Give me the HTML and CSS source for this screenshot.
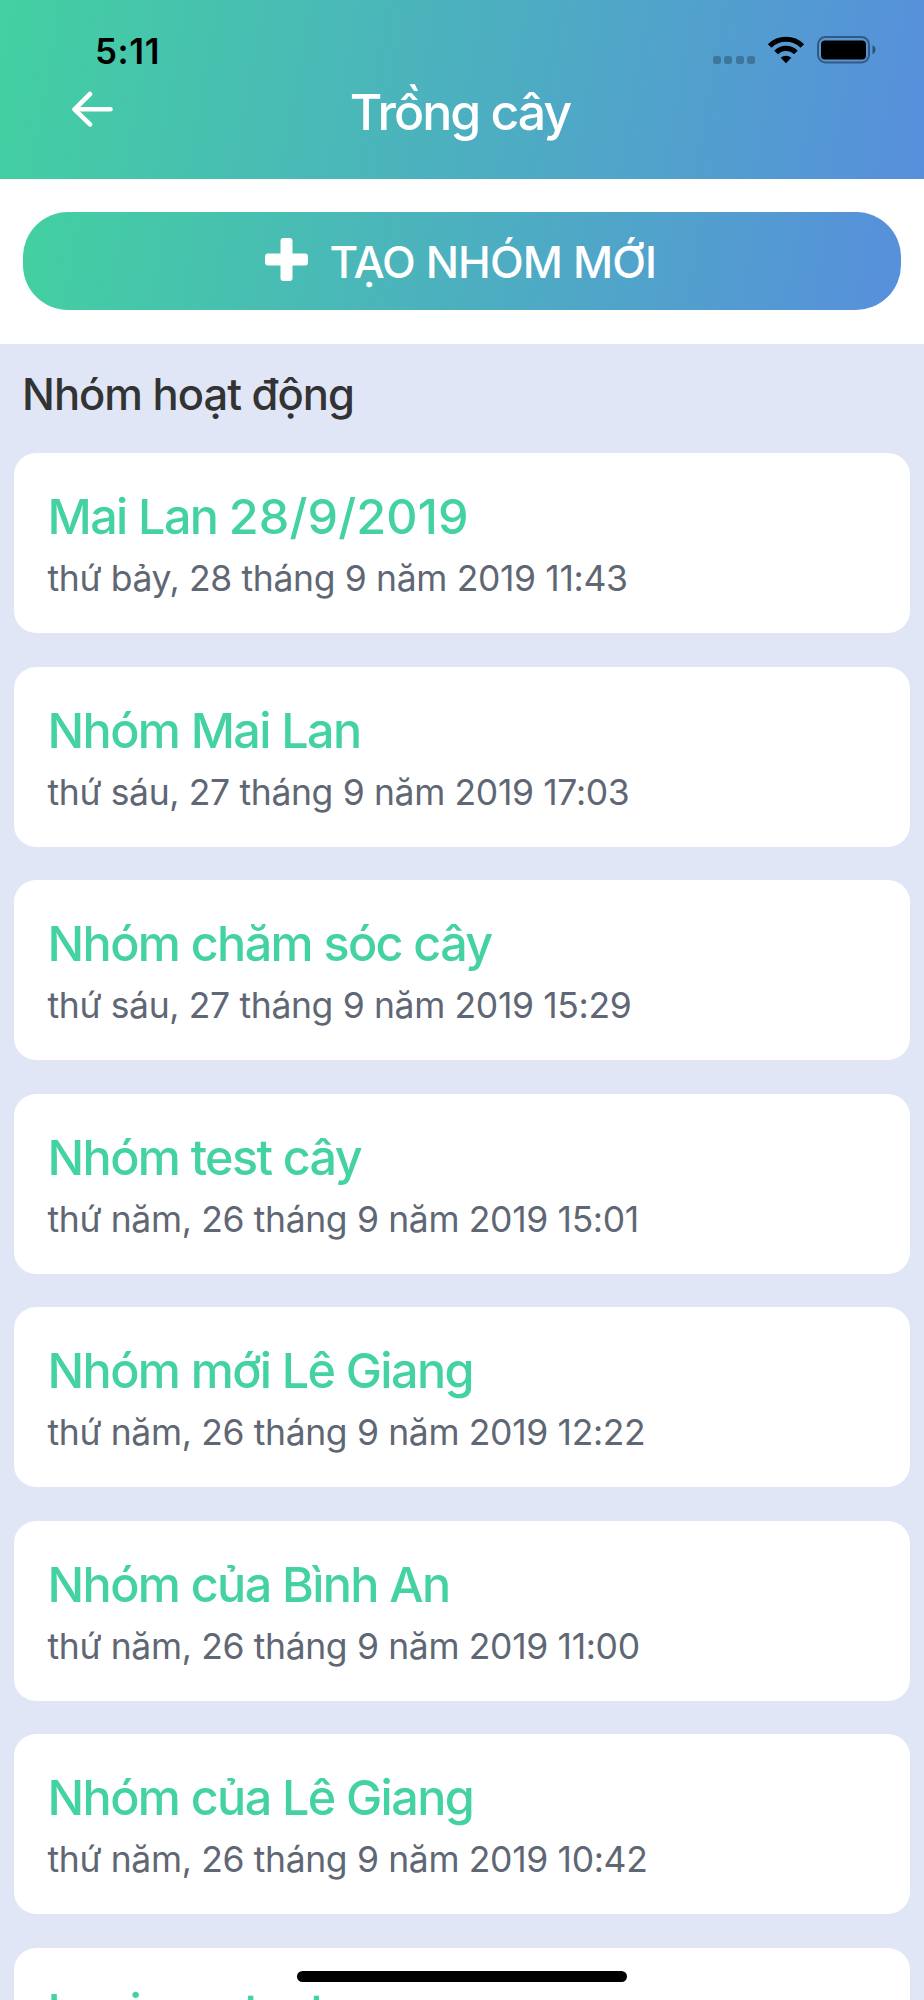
FILE: index.html
```html
<!DOCTYPE html>
<html lang="vi">
<head>
<meta charset="utf-8">
<title>Trồng cây</title>
<link rel="stylesheet" href="styles.css">
</head>
<body>
<div class="screen">
  <header class="header">
    <div class="status">
      <span class="time">5:11</span>
      <div class="indicators">
        <span class="dots"><i></i><i></i><i></i><i></i></span>
        <svg class="wifi" width="38" height="28" viewBox="0 0 38 28">
          <g fill="none" stroke="#000" stroke-width="5.2">
            <path d="M2.7 10a23.1 23.1 0 0 1 32.6 0"/>
            <path d="M9.1 16.5a14 14 0 0 1 19.8 0"/>
          </g>
          <path d="M13.7 21.8a7.6 7.6 0 0 1 10.6 0L19 27.3z"/>
        </svg>
        <svg class="battery" width="60" height="28" viewBox="0 0 60 28">
          <rect x="1" y="1" width="51" height="25.5" rx="7.5" fill="none" stroke="#000" stroke-opacity=".4" stroke-width="2"/>
          <rect x="4" y="4.5" width="45" height="19" rx="4"/>
          <path d="M55.5 9.3c4 1.600 4 7.400 0 9z" fill-opacity=".45"/>
        </svg>
      </div>
    </div>
    <div class="navbar">
      <svg class="back" width="42" height="36" viewBox="0 0 42 36" fill="none" stroke="#fff" stroke-width="4.600" stroke-linecap="round" stroke-linejoin="round">
        <path d="M19 3 3.500 18.300l15.500 15M3.500 18.300h36"/>
      </svg>
      <h1 class="title">Trồng cây</h1>
    </div>
  </header>
  <div class="action">
    <button class="create">
      <svg width="43" height="43" viewBox="0 0 43 43" fill="#fff">
        <rect x="15.500" y="0" width="12" height="43" rx="3"/>
        <rect x="0" y="15.500" width="43" height="12" rx="3"/>
      </svg>
      <span>TẠO NHÓM MỚI</span>
    </button>
  </div>
  <main class="groups">
    <h2 class="section">Nhóm hoạt động</h2>
    <article class="card"><h3>Mai Lan <span class="num">28/9/2019</span></h3><p>thứ bảy, 28 tháng 9 năm 2019 11:43</p></article>
    <article class="card"><h3>Nhóm Mai Lan</h3><p>thứ sáu, 27 tháng 9 năm 2019 17:03</p></article>
    <article class="card"><h3>Nhóm chăm sóc cây</h3><p>thứ sáu, 27 tháng 9 năm 2019 15:29</p></article>
    <article class="card"><h3>Nhóm test cây</h3><p>thứ năm, 26 tháng 9 năm 2019 15:01</p></article>
    <article class="card"><h3>Nhóm mới Lê Giang</h3><p>thứ năm, 26 tháng 9 năm 2019 12:22</p></article>
    <article class="card"><h3>Nhóm của Bình An</h3><p>thứ năm, 26 tháng 9 năm 2019 11:00</p></article>
    <article class="card"><h3>Nhóm của Lê Giang</h3><p>thứ năm, 26 tháng 9 năm 2019 10:42</p></article>
    <article class="card"><h3>Loginew test</h3></article>
  </main>
  <div class="home-bar"></div>
</div>
</body>
</html>
```

FILE: styles.css
```css
* { box-sizing: border-box; }
body { margin: 0; font-family: Inter, "Noto Sans", sans-serif; }
h1, h2, h3, p { margin: 0; white-space: nowrap; }
.screen {
  position: relative;
  width: 924px;
  height: 2000px;
  overflow: hidden;
  background: #e0e6f6;
}
.header {
  height: 178.500px;
  padding-top: 30px;
  background: linear-gradient(100deg, #43d0a1 0%, #4cb0bf 50%, #578fdc 100%);
}
.status {
  display: flex;
  justify-content: space-between;
  height: 42px;
  padding: 0 47px 0 95px;
}
.time { font-size: 35px; line-height: 42px; font-weight: 600; letter-spacing: 0.600px; }
.indicators { display: flex; padding-top: 6px; }
.dots { display: flex; gap: 3.300px; padding-top: 20px; margin-right: 12px; }
.dots i { width: 8px; height: 7.500px; border-radius: 2.500px; background: rgba(0, 0, 0, .25); }
.wifi { margin-right: 12px; }
.navbar {
  display: grid;
  grid-template-columns: 72px 1fr 76px;
  align-items: center;
  height: 80px;
}
.back { margin: -6px 0 0 71px; }
.title {
  color: #fff;
  font-size: 50px;
  line-height: 60px;
  font-weight: 500;
  letter-spacing: -2px;
  text-align: center;
}
.action { height: 165.500px; padding: 33.500px 23px; background: #fff; }
.create {
  display: flex;
  align-items: center;
  justify-content: center;
  gap: 21.500px;
  width: 100%;
  height: 98.300px;
  padding: 0 3px 2px 0;
  border: 0;
  border-radius: 45px;
  background: linear-gradient(100deg, #43d0a1 0%, #4cb0bf 50%, #578fdc 100%);
  color: #fff;
  font: 500 44px/54px Inter, "Noto Sans", sans-serif;
  letter-spacing: -0.900px;
}
.create svg { margin-top: -1px; }
.create span { padding-top: 4px; }
.section {
  height: 109px;
  padding: 23px 22px 0;
  color: #333;
  font-size: 43.500px;
  line-height: 54px;
  font-weight: 500;
  letter-spacing: -1px;
}
.card {
  height: 180px;
  margin: 0 14px 33.500px;
  padding: 34px 33.500px;
  border-radius: 22px;
  background: #fff;
}
.card h3 {
  color: #43d2a0;
  font-size: 48.500px;
  line-height: 60px;
  font-weight: 500;
  letter-spacing: -1.600px;
}
.card .num { letter-spacing: 0.150px; }
.card p {
  margin-top: 10px;
  color: #5f6774;
  font-size: 35.500px;
  line-height: 44px;
  letter-spacing: -0.350px;
}
.home-bar {
  position: absolute;
  left: 297px;
  top: 1971px;
  width: 330px;
  height: 11px;
  border-radius: 6px;
  background: #000;
}
```
